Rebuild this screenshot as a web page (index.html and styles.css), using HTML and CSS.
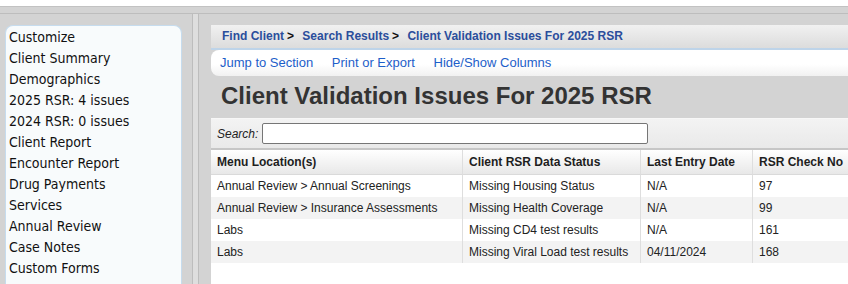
FILE: index.html
```html
<!DOCTYPE html>
<html lang="en">
<head>
  <meta charset="UTF-8" />
  <title>Client Validation Issues For 2025 RSR</title>
  <link rel="stylesheet" href="styles.css">
</head>
<body>
  <div class="topbar"></div>

  <div class="layout">
    <aside class="left-pane">
      <ul class="side-menu">
        <li>Customize</li>
        <li>Client Summary</li>
        <li>Demographics</li>
        <li>2025 RSR: 4 issues</li>
        <li>2024 RSR: 0 issues</li>
        <li>Client Report</li>
        <li>Encounter Report</li>
        <li>Drug Payments</li>
        <li>Services</li>
        <li>Annual Review</li>
        <li>Case Notes</li>
        <li>Custom Forms</li>
      </ul>
    </aside>

    <div class="splitter"></div>

    <main class="right-pane">
      <div class="breadcrumb">
        <a href="#">Find Client</a><span class="sep">&gt;</span>
        <a href="#">Search Results</a><span class="sep">&gt;</span>
        <a href="#">Client Validation Issues For 2025 RSR</a>
      </div>

      <div class="actions">
        <a href="#">Jump to Section</a>
        <a href="#">Print or Export</a>
        <a href="#">Hide/Show Columns</a>
      </div>

      <h1>Client Validation Issues For 2025 RSR</h1>

      <div class="search-bar">
        <label for="search">Search:</label>
        <input type="text" id="search" />
      </div>

      <div class="grid-wrap">
        <table class="grid">
          <thead>
            <tr>
              <th class="col-menu">Menu Location(s)</th>
              <th class="col-status">Client RSR Data Status</th>
              <th class="col-date">Last Entry Date</th>
              <th>RSR Check No</th>
            </tr>
          </thead>
          <tbody>
            <tr>
              <td>Annual Review &gt; Annual Screenings</td>
              <td>Missing Housing Status</td>
              <td>N/A</td>
              <td>97</td>
            </tr>
            <tr>
              <td>Annual Review &gt; Insurance Assessments</td>
              <td>Missing Health Coverage</td>
              <td>N/A</td>
              <td>99</td>
            </tr>
            <tr>
              <td>Labs</td>
              <td>Missing CD4 test results</td>
              <td>N/A</td>
              <td>161</td>
            </tr>
            <tr>
              <td>Labs</td>
              <td>Missing Viral Load test results</td>
              <td>04/11/2024</td>
              <td>168</td>
            </tr>
          </tbody>
        </table>
      </div>
    </main>
  </div>
</body>
</html>
```

FILE: styles.css
```css
html, body {
  margin: 0;
  height: 100%;
  overflow: hidden;
}

body {
  background: white;
  font-family: "Liberation Sans", Arial, sans-serif;
  color: #222;
}

.topbar {
  height: 6px;
  border-bottom: 1px solid #c2c2c2;
}

.layout {
  display: flex;
  height: calc(100% - 7px);
  padding-top: 6px;
  background: #d3d3d3;
  box-sizing: border-box;
}

/* left side menu */
.left-pane {
  flex: none;
  display: flex;
  flex-direction: column;
  width: 193px;
  padding: 11px 10px 0 5px;
  border-top: 1px solid #bdbdbd;
  border-right: 1px solid #bdbdbd;
  box-sizing: border-box;
}

.side-menu {
  flex: 1;
  list-style: none;
  margin: 0;
  padding: 1px 3px;
  background: #f8fbfc;
  border: 1px solid #c6dcee;
  border-bottom: none;
  border-radius: 8px 8px 0 0;
  font-family: "DejaVu Sans", Verdana, sans-serif;
  font-stretch: condensed;
  font-size: 14px;
  line-height: 21px;
  color: #111;
}

.splitter {
  flex: none;
  width: 5px;
  background: #dedede;
  border-top: 1px solid #bdbdbd;
}

/* right content */
.right-pane {
  flex: none;
  display: flex;
  flex-direction: column;
  width: 680px;
  padding: 11px 0 0 12px;
  border-top: 1px solid #bdbdbd;
  border-left: 1px solid #bdbdbd;
  box-sizing: border-box;
}

.breadcrumb {
  height: 23px;
  line-height: 23px;
  padding-left: 11px;
  background: linear-gradient(#f1f1f1, #dcdcdc);
  border-bottom: 2px solid #bed4e9;
  font-size: 12px;
  font-weight: bold;
}

.breadcrumb a {
  color: #2b4e9c;
  text-decoration: none;
}

.breadcrumb .sep {
  margin: 0 5px 0 3px;
  color: #111;
}

.actions {
  height: 26px;
  line-height: 26px;
  padding-left: 9px;
  background: linear-gradient(#ffffff 55%, #f1f1f1);
  border-radius: 8px 0 0 8px;
  font-size: 13px;
}

.actions a {
  color: #1d5ec9;
  text-decoration: none;
  margin-right: 15px;
}

h1 {
  margin: 0;
  height: 42px;
  line-height: 40px;
  padding-left: 10px;
  font-size: 24px;
  color: #333;
}

.search-bar {
  display: flex;
  align-items: center;
  height: 29px;
  padding-left: 6px;
  background: linear-gradient(#f3f3f3, #e9e9e9);
  border-top: 1px solid #f7f7f7;
  border-bottom: 2px solid #c6c6c6;
  font-size: 12px;
}

.search-bar label {
  font-style: italic;
  color: #222;
}

.search-bar input {
  width: 386px;
  height: 21px;
  margin: 0 0 0 4px;
  padding: 0 4px;
  border: 1px solid #767676;
  border-radius: 2px;
  box-sizing: border-box;
  background: white;
}

.grid-wrap {
  flex: 1;
  background: white;
}

.grid {
  width: 100%;
  border-collapse: separate;
  border-spacing: 0;
  table-layout: fixed;
  font-size: 12px;
}

.grid th, .grid td {
  box-sizing: border-box;
  padding: 0 6px;
  text-align: left;
  white-space: nowrap;
  overflow: hidden;
}

.grid th + th, .grid td + td {
  border-left: 1px solid #dedede;
}

.grid th {
  height: 25px;
  background: linear-gradient(#ffffff, #e8e8e8);
  border-bottom: 1px solid #dadada;
  color: #1e1e1e;
}

.grid td {
  height: 22px;
}

.grid tbody tr:nth-child(even) td {
  background: #f3f3f3;
}

.col-menu { width: 251px; }
.col-status { width: 178px; }
.col-date { width: 112px; }
```
